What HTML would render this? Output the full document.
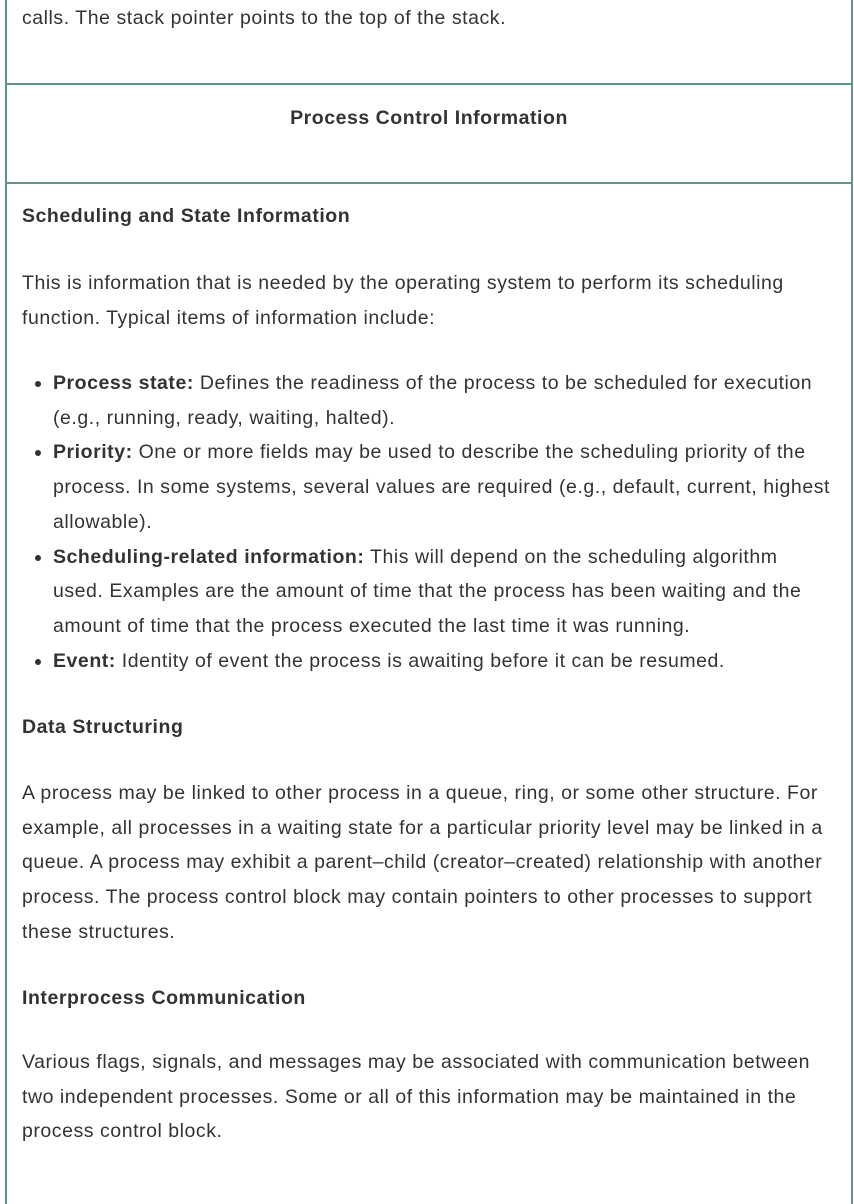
<!DOCTYPE html>
<html><head><style>
html,body{margin:0;padding:0;background:#fff;}
body{width:854px;height:1204px;overflow:hidden;position:relative;font-family:"Liberation Sans",Arial,sans-serif;font-size:19.5px;letter-spacing:0.54px;color:#333;line-height:34.7px;}
.vl{position:absolute;top:0;width:2px;height:1204px;background:#5f9585;}
.hl{position:absolute;left:5px;width:848px;height:2px;background:#5f9585;}
.t{position:absolute;left:22px;width:812px;margin:0;}
b{font-weight:bold;}
ul{position:absolute;left:0;margin:0;padding:0 0 0 53px;width:783px;list-style:disc;}
li{margin:0;}
</style></head><body>
<div class="vl" style="left:5px"></div>
<div class="vl" style="left:851px"></div>
<div class="hl" style="top:83px"></div>
<div class="hl" style="top:182px"></div>
<p class="t" style="top:1px">calls. The stack pointer points to the top of the stack.</p>
<p class="t" style="top:101px;left:6px;width:846px;text-align:center"><b>Process Control Information</b></p>
<p class="t" style="top:199px"><b>Scheduling and State Information</b></p>
<p class="t" style="top:266px">This is information that is needed by the operating system to perform its scheduling function. Typical items of information include:</p>
<ul style="top:366px">
<li><b>Process state:</b> Defines the readiness of the process to be scheduled for execution (e.g., running, ready, waiting, halted).</li>
<li><b>Priority:</b> One or more fields may be used to describe the scheduling priority of the process. In some systems, several values are required (e.g., default, current, highest allowable).</li>
<li><b>Scheduling-related information:</b> This will depend on the scheduling algorithm<br>used. Examples are the amount of time that the process has been waiting and the amount of time that the process executed the last time it was running.</li>
<li><b>Event:</b> Identity of event the process is awaiting before it can be resumed.</li>
</ul>
<p class="t" style="top:710px"><b>Data Structuring</b></p>
<p class="t" style="top:776px">A process may be linked to other process in a queue, ring, or some other structure. For example, all processes in a waiting state for a particular priority level may be linked in a queue. A process may exhibit a parent–child (creator–created) relationship with another process. The process control block may contain pointers to other processes to support these structures.</p>
<p class="t" style="top:981px"><b>Interprocess Communication</b></p>
<p class="t" style="top:1045px">Various flags, signals, and messages may be associated with communication between two independent processes. Some or all of this information may be maintained in the process control block.</p>
</body></html>
